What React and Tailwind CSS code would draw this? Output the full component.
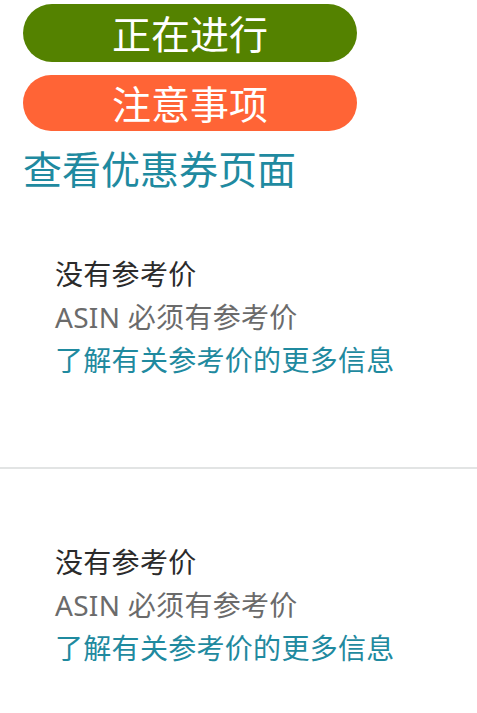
const font = { fontFamily: '"Noto Sans", "Noto Sans CJK SC", sans-serif' };

function PriceNote() {
  return (
    <div className="pl-[55px] text-[28px] leading-[43px] tracking-[0.3px]">
      <p className="text-[#2b2b2b]">没有参考价</p>
      <p className="text-[#6b6b6b]">ASIN 必须有参考价</p>
      <a className="block text-[#1f8a9f]">了解有关参考价的更多信息</a>
    </div>
  );
}

export default function App() {
  return (
    <div className="w-[477px] h-[713px] bg-white overflow-hidden" style={font}>
      <div className="pt-[4px] pl-[23px]">
        <div className="w-[334px] h-[58px] rounded-full bg-[#548200] flex items-center justify-center text-white text-[39px] leading-none">
          正在进行
        </div>
        <div className="mt-[13px] w-[334px] h-[56px] rounded-full bg-[#ff6436] flex items-center justify-center text-white text-[39px] leading-none">
          注意事项
        </div>
        <a className="block mt-[15px] text-[39px] leading-[46px] text-[#1f8aa0]">查看优惠券页面</a>
      </div>
      <div className="mt-[61px]">
        <PriceNote />
      </div>
      <div className="mt-[85px] h-[2px] bg-[#e2e4e4]" />
      <div className="mt-[72px]">
        <PriceNote />
      </div>
    </div>
  );
}
